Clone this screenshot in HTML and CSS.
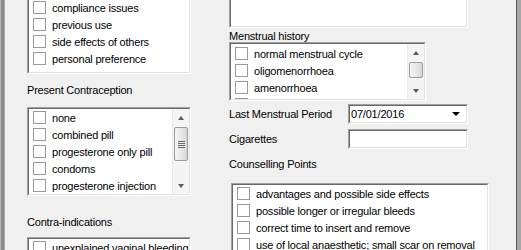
FILE: index.html
```html
<!DOCTYPE html>
<html lang="en">
    <head>
        <title>Contraception consultation</title>
        <link rel="stylesheet" href="styles.css">
    </head>

    <body>
        <div class="window">
            <div class="frame-left"></div>

            <div class="panel">
                <div class="col-left">
                    <div class="box box-reasons">
                        <div class="box-in">
                            <div class="items">
                                <div class="item"><span class="check"></span>compliance issues</div>
                                <div class="item"><span class="check"></span>previous use</div>
                                <div class="item"><span class="check"></span>side effects of others</div>
                                <div class="item"><span class="check"></span>personal preference</div>
                            </div>
                        </div>
                    </div>

                    <div class="label label-present">Present Contraception</div>
                    <div class="box box-present">
                        <div class="box-in">
                            <div class="items">
                                <div class="item"><span class="check"></span>none</div>
                                <div class="item"><span class="check"></span>combined pill</div>
                                <div class="item"><span class="check"></span>progesterone only pill</div>
                                <div class="item"><span class="check"></span>condoms</div>
                                <div class="item"><span class="check"></span>progesterone injection</div>
                            </div>
                            <div class="vscroll">
                                <span class="btn"><span class="arrow-up"></span></span>
                                <span class="track"><span class="thumb thumb-long"><i class="grip"></i></span></span>
                                <span class="btn"><span class="arrow-down"></span></span>
                            </div>
                        </div>
                    </div>

                    <div class="label label-contra">Contra-indications</div>
                    <div class="box box-contra">
                        <div class="box-in">
                            <div class="items">
                                <div class="item"><span class="check"></span>unexplained vaginal bleeding</div>
                            </div>
                        </div>
                    </div>
                </div>

                <div class="col-right">
                    <div class="box memo"><div class="box-in"></div></div>

                    <div class="label label-menstrual">Menstrual history</div>
                    <div class="box box-menstrual">
                        <div class="box-in">
                            <div class="items">
                                <div class="item"><span class="check"></span>normal menstrual cycle</div>
                                <div class="item"><span class="check"></span>oligomenorrhoea</div>
                                <div class="item"><span class="check"></span>amenorrhoea</div>
                                <div class="item"><span class="check"></span>menorrhagia</div>
                            </div>
                            <div class="vscroll">
                                <span class="btn"><span class="arrow-up"></span></span>
                                <span class="track"><span class="thumb thumb-short"></span></span>
                                <span class="btn"><span class="arrow-down"></span></span>
                            </div>
                        </div>
                    </div>

                    <div class="field field-lmp">
                        <span class="field-label">Last Menstrual Period</span>
                        <div class="box combo">
                            <div class="box-in">
                                <span class="combo-text">07/01/2016</span>
                                <span class="drop"></span>
                            </div>
                        </div>
                    </div>

                    <div class="field field-cig">
                        <span class="field-label">Cigarettes</span>
                        <div class="box edit"><div class="box-in"></div></div>
                    </div>

                    <div class="label label-counsel">Counselling Points</div>
                    <div class="box box-counsel">
                        <div class="box-in">
                            <div class="items">
                                <div class="item"><span class="check"></span>advantages and possible side effects</div>
                                <div class="item"><span class="check"></span>possible longer or irregular bleeds</div>
                                <div class="item"><span class="check"></span>correct time to insert and remove</div>
                                <div class="item"><span class="check"></span>use of local anaesthetic; small scar on removal</div>
                            </div>
                        </div>
                    </div>
                </div>
            </div>

            <div class="frame-right"></div>
        </div>
    </body>
</html>
```

FILE: styles.css
```css
* {
    box-sizing: border-box;
}

body {
    margin: 0;
    height: 250px;
    overflow: hidden;
    background-color: #f0f0f0;
    color: #000;
    font-family: "Liberation Sans", Arial, sans-serif;
    font-size: 11px;
    letter-spacing: -0.2px;
}

.window {
    display: flex;
    height: 250px;
}

.frame-left {
    width: 5px;
    background: linear-gradient(to right, #b6b6b6 0 1px, #8a8a8a 1px 4px, #a9a9a9 4px);
}

.frame-right {
    width: 5px;
    border-left: 1px solid #585858;
    background-color: #a7a7a7;
}

.panel {
    flex: 1;
    display: flex;
    padding-left: 22px;
}

.col-left {
    width: 164px;
    display: flex;
    flex-direction: column;
}

.col-right {
    width: 261px;
    margin-left: 38px;
    display: flex;
    flex-direction: column;
}

/* sunken 3d border, two pixels */
.box {
    border: 1px solid;
    border-color: #a0a0a0 #fff #fff #a0a0a0;
    flex: none;
}

.box-in {
    height: 100%;
    display: flex;
    background-color: #fff;
    border: 1px solid;
    border-color: #696969 #e3e3e3 #e3e3e3 #696969;
    overflow: hidden;
}

.items {
    flex: 1;
    padding-left: 4px;
    overflow: hidden;
}

.item {
    display: flex;
    align-items: center;
    height: 17px;
    white-space: nowrap;
}

.check {
    flex: none;
    width: 13px;
    height: 13px;
    margin-right: 6px;
    border: 1px solid #9a9a9a;
    background-color: #fff;
}

.label {
    line-height: 13px;
    height: 13px;
    white-space: nowrap;
}

/* left column */
.box-reasons {
    margin-top: -3px;
    height: 77px;
}

.label-present {
    margin-top: 10px;
}

.box-present {
    margin-top: 10px;
    height: 89px;
}

.label-contra {
    margin-top: 20px;
}

.box-contra {
    margin-top: 8px;
    height: 40px;
}

/* scrollbars */
.vscroll {
    flex: none;
    width: 17px;
    display: flex;
    flex-direction: column;
    background-color: #f4f4f4;
    border-left: 1px solid #ebebeb;
}

.btn {
    height: 17px;
    display: flex;
    align-items: center;
    justify-content: center;
}

.track {
    flex: 1;
    padding: 1px 1px 0 1px;
}

.thumb {
    display: flex;
    align-items: center;
    justify-content: center;
    border: 1px solid #9c9c9c;
    border-radius: 2px;
    background: linear-gradient(to right, #f6f6f6, #e6e6e6 60%, #d6d6d6);
}

.thumb-long {
    height: 34px;
}

.thumb-short {
    height: 16px;
}

.grip {
    width: 7px;
    height: 7px;
    background: repeating-linear-gradient(to bottom, #6c6c6c 0 1px, #e8e8e8 1px 2px);
}

.arrow-up, .arrow-down {
    width: 0;
    height: 0;
    border-left: 3.5px solid transparent;
    border-right: 3.5px solid transparent;
}

.arrow-up {
    border-bottom: 4px solid #5a5a5a;
}

.arrow-down {
    border-top: 4px solid #5a5a5a;
}

/* right column */
.memo {
    margin-top: -10px;
    width: 239px;
    height: 38px;
}

.label-menstrual {
    margin-top: 2px;
    height: 12px;
    line-height: 12px;
}

.box-menstrual {
    width: 197px;
    height: 59px;
}

.box-menstrual .items {
    padding-top: 1px;
}

.field {
    display: flex;
    align-items: center;
}

.field-label {
    width: 119px;
    white-space: nowrap;
}

.field-lmp {
    margin-top: 3px;
}

.field-cig {
    margin-top: 5px;
}

.combo, .edit {
    width: 120px;
    height: 20px;
}

.combo .box-in {
    align-items: center;
    padding-left: 1px;
    padding-right: 6px;
}

.combo-text {
    flex: 1;
}

.drop {
    width: 0;
    height: 0;
    border-left: 4px solid transparent;
    border-right: 4px solid transparent;
    border-top: 4px solid #000;
}

.label-counsel {
    margin-top: 9px;
}

.box-counsel {
    margin-top: 12px;
    margin-left: 2px;
    width: 258px;
    height: 80px;
}
```
